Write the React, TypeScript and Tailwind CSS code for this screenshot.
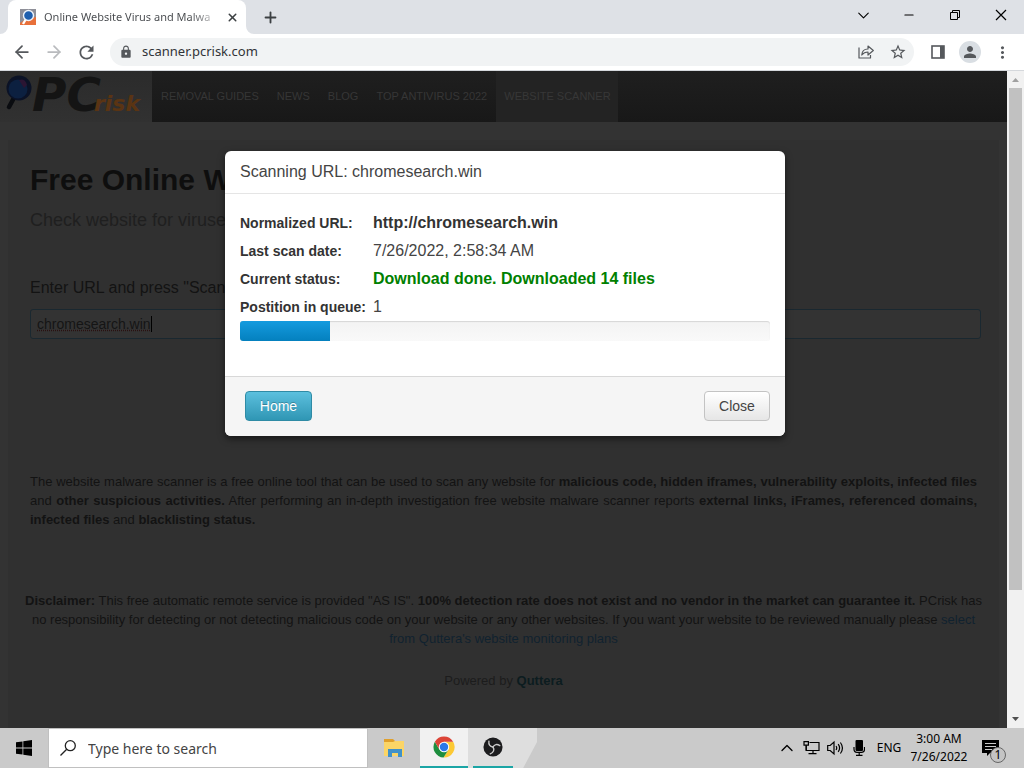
import React from "react";
import { ArrowLeft, ArrowRight, ChevronDown, ChevronUp, Minus, Plus, X } from "lucide-react";
import { MdLock, MdMoreVert, MdPerson, MdRefresh, MdStarBorder } from "react-icons/md";

const navItems = ["REMOVAL GUIDES", "NEWS", "BLOG", "TOP ANTIVIRUS 2022"];

function Magnifier({ className }: { className: string }) {
  return (
    <svg viewBox="0 0 28 38" className={className} aria-hidden="true">
      <path d="M10 22 L4 33" stroke="#0a0c10" strokeWidth="4.5" strokeLinecap="round" />
      <circle cx="14" cy="14" r="12.5" fill="#0b1226" />
      <circle cx="13" cy="15" r="9.5" fill="#0c2040" />
      <path d="M14 6 q6 -2 8 5 l-3 3 z" fill="#2b1533" />
    </svg>
  );
}

function TabStrip() {
  return (
    <header className="flex h-[34px] shrink-0 items-stretch bg-[#dee1e6]">
      <div className="flex w-[254px] items-end">
        <svg viewBox="0 0 8 8" className="h-2 w-2 shrink-0" aria-hidden="true">
          <path d="M8 0 V8 H0 A8 8 0 0 0 8 0 Z" fill="#fff" />
        </svg>
        <div className="flex h-full min-w-0 flex-1 items-center rounded-t-lg bg-white pl-3 pr-[6px]">
          <svg viewBox="0 0 16 16" className="mr-2 h-4 w-4 shrink-0" aria-hidden="true">
            <rect width="16" height="16" fill="#e8703a" />
            <path d="M0 0 H16 V8 L6 10 L0 14 Z" fill="#8e8f98" />
            <path d="M6 10 L3 15" stroke="#fff" strokeWidth="2.4" />
            <circle cx="8.5" cy="6.5" r="5" fill="#1f5fae" stroke="#eef3fa" strokeWidth="1.4" />
          </svg>
          <span className="min-w-0 flex-1 whitespace-nowrap bg-gradient-to-r from-[#45484c] from-85% to-[#ddd] bg-clip-text text-[11px] text-transparent">
            Online Website Virus and Malwa
          </span>
          <button type="button" aria-label="Close tab" className="ml-2 flex h-4 w-4 items-center justify-center text-[#3c4043]">
            <X size={13} strokeWidth={2.8} />
          </button>
        </div>
        <svg viewBox="0 0 8 8" className="h-2 w-2 shrink-0" aria-hidden="true">
          <path d="M0 0 V8 H8 A8 8 0 0 1 0 0 Z" fill="#fff" />
        </svg>
      </div>
      <button type="button" aria-label="New tab" className="flex w-8 items-center justify-center text-[#3c4043]">
        <Plus size={17} strokeWidth={2.6} />
      </button>
      <div className="ml-auto flex pb-1 text-black">
        <button type="button" aria-label="Search tabs" className="flex w-[46px] items-center justify-center">
          <ChevronDown size={19} strokeWidth={1.4} />
        </button>
        <button type="button" aria-label="Minimize" className="flex w-[46px] items-center justify-center">
          <Minus size={14} strokeWidth={2} />
        </button>
        <button type="button" aria-label="Restore" className="flex w-[46px] items-center justify-center">
          <svg viewBox="0 0 10 10" className="h-[10px] w-[10px]" fill="none" stroke="currentColor" aria-hidden="true">
            <path d="M0.5 2.5 H7.5 V9.5 H0.5 Z M2.5 2.5 V0.5 H9.5 V7.5 H7.5" />
          </svg>
        </button>
        <button type="button" aria-label="Close window" className="flex w-[46px] items-center justify-center">
          <svg viewBox="0 0 12 12" className="h-3 w-3" stroke="currentColor" strokeWidth="1.2" aria-hidden="true">
            <path d="M1 1 L11 11 M11 1 L1 11" />
          </svg>
        </button>
      </div>
    </header>
  );
}

function Toolbar() {
  return (
    <div className="flex h-[37px] shrink-0 items-center border-b border-[#d5d8dc] bg-white pl-[6px] pr-[6px] text-[#55585c]">
      <button type="button" aria-label="Back" className="flex w-8 justify-center">
        <ArrowLeft size={20} strokeWidth={2.1} />
      </button>
      <button type="button" aria-label="Forward" className="flex w-8 justify-center text-[#b9bbbe]">
        <ArrowRight size={20} strokeWidth={2.1} />
      </button>
      <button type="button" aria-label="Reload" className="flex w-8 justify-center">
        <MdRefresh size={21} />
      </button>
      <div className="ml-2 flex h-7 flex-1 items-center rounded-full bg-[#f1f3f4] pl-[9px]">
        <MdLock size={14} />
        <input
          aria-label="Address"
          defaultValue="scanner.pcrisk.com"
          className="ml-[9px] min-w-0 flex-1 bg-transparent text-[13px] text-[#303338] outline-none"
        />
        <button type="button" aria-label="Share" className="flex w-8 justify-center">
          <svg viewBox="0 0 16 16" className="h-4 w-4" fill="none" stroke="currentColor" strokeWidth="1.2" strokeLinejoin="round" aria-hidden="true">
            <path d="M1 3.5 V14 H12.5 V11" />
            <path d="M3.8 11 C4 7 6.5 5 10 5 V2 L15.3 6.5 L10 11 V8 C7.5 8 5.5 8.8 3.8 11 Z" />
          </svg>
        </button>
        <button type="button" aria-label="Bookmark" className="flex w-8 justify-center">
          <MdStarBorder size={18} />
        </button>
      </div>
      <button type="button" aria-label="Side panel" className="ml-2 flex w-8 justify-center">
        <svg viewBox="0 0 14 14" className="h-[14px] w-[14px]" aria-hidden="true">
          <rect x="1" y="1" width="12" height="12" fill="none" stroke="currentColor" strokeWidth="1.6" />
          <rect x="9" y="1" width="4" height="12" fill="currentColor" />
        </svg>
      </button>
      <button type="button" aria-label="Profile" className="flex w-8 justify-center">
        <span className="flex h-[22px] w-[22px] items-center justify-center rounded-full bg-[#d9dee3]">
          <MdPerson size={18} />
        </span>
      </button>
      <button type="button" aria-label="Menu" className="flex w-8 justify-center">
        <MdMoreVert size={19} />
      </button>
    </div>
  );
}

function SiteNav() {
  return (
    <nav className="flex h-[51px] shrink-0 bg-gradient-to-b from-[#1f1f1f] to-[#181818] text-[11px] text-[#363636]">
      <a href="#home" className="flex w-[152px] items-start bg-gradient-to-b from-[#2b2b2b] to-[#313131] pl-[5px]">
        <Magnifier className="mt-[3px] h-[38px] w-7 shrink-0" />
        <span className="-ml-px flex items-baseline font-['DejaVu_Sans'] font-bold italic leading-none">
          <span className="text-[47px] text-[#141414]">PC</span>
          <span className="-ml-[7px] text-[22px] text-[#5a3413]">risk</span>
        </span>
      </a>
      {navItems.map((item) => (
        <a key={item} href="#nav" className="flex items-center px-[9px]">
          {item}
        </a>
      ))}
      <a href="#scanner" className="flex items-center bg-[#232323] pl-2 pr-[7px] text-[#373737]">
        WEBSITE SCANNER
      </a>
    </nav>
  );
}

function ScannerPage() {
  return (
    <main className="flex min-h-0 flex-1 flex-col overflow-hidden bg-[#333333] pt-[18px]">
      <div className="mx-2 flex-1 bg-[#303030] px-[22px] pt-6 text-[13px] leading-[19px] text-[#131313]">
        <h1 className="text-[30px] font-bold leading-8 text-[#0e0e0e]">Free Online Website Scanner</h1>
        <p className="mt-3 text-[18px] leading-6 text-[#1f1f1f]">Check website for viruses</p>
        <form className="mt-11 mr-[-4px]">
          <label htmlFor="url" className="block text-[16px] leading-6">
            Enter URL and press &quot;Scan&quot;
          </label>
          <div className="relative mt-[9px]">
            <input
              id="url"
              defaultValue="chromesearch.win"
              className="block h-[30px] w-full rounded-[3px] border border-[#1a2830] bg-[#333333] px-[6px] text-[14px] text-[#151515] underline decoration-[#2a1010] decoration-dotted outline-none"
            />
            <span className="absolute left-[121px] top-[7px] h-4 w-px bg-black" />
          </div>
        </form>
        <p className="mt-[133px] text-justify">
          The website malware scanner is a free online tool that can be used to scan any website for{" "}
          <b>malicious code, hidden iframes, vulnerability exploits, infected files</b> and{" "}
          <b>other suspicious activities.</b> After performing an in-depth investigation free website malware scanner
          reports <b>external links, iFrames, referenced domains, infected files</b> and <b>blacklisting status.</b>
        </p>
        <p className="-mx-2 mt-[62px] text-center">
          <b>Disclaimer:</b> This free automatic remote service is provided &quot;AS IS&quot;.{" "}
          <b>100% detection rate does not exist and no vendor in the market can guarantee it.</b> PCrisk has no
          responsibility for detecting or not detecting malicious code on your website or any other websites. If you
          want your website to be reviewed manually please{" "}
          <a href="#plans" className="text-[#10222f]">
            select from Quttera&apos;s website monitoring plans
          </a>
        </p>
        <p className="mt-[23px] text-center text-[#1c1c1c]">
          Powered by{" "}
          <a href="#quttera" className="font-bold text-[#0c1c1f]">
            Quttera
          </a>
        </p>
      </div>
    </main>
  );
}

function ScanDialog() {
  const rows = [
    { label: "Normalized URL:", value: "http://chromesearch.win", style: "font-bold text-[#333]" },
    { label: "Last scan date:", value: "7/26/2022, 2:58:34 AM", style: "text-[#444]" },
    { label: "Current status:", value: "Download done. Downloaded 14 files", style: "font-bold text-[#008000]" },
    { label: "Postition in queue:", value: "1", style: "text-[#444]" },
  ];
  const progress = 17;
  return (
    <div className="absolute inset-0 flex items-start justify-center pl-[3px] pt-20">
      <section
        role="dialog"
        aria-labelledby="scan-title"
        className="w-[560px] overflow-hidden rounded-md bg-white shadow-[0_3px_7px_rgba(0,0,0,0.5)]"
      >
        <h2 id="scan-title" className="border-b border-[#e5e5e5] px-[15px] py-[9px] text-[16px] leading-6 text-[#444]">
          Scanning URL: chromesearch.win
        </h2>
        <div className="px-[15px] pb-[35px] pt-[15px]">
          <dl className="grid grid-cols-[133px_1fr] leading-7">
            {rows.map((row) => (
              <React.Fragment key={row.label}>
                <dt className="whitespace-nowrap text-[14px] font-bold text-[#333]">{row.label}</dt>
                <dd className={`text-[16px] ${row.style}`}>{row.value}</dd>
              </React.Fragment>
            ))}
          </dl>
          <div className="h-5 overflow-hidden rounded-[3px] bg-gradient-to-b from-[#f3f3f3] to-[#f9f9f9] shadow-[inset_0_1px_1px_rgba(0,0,0,0.12)]">
            <div className="h-full bg-gradient-to-b from-[#149bdf] to-[#0480be]" style={{ width: `${progress}%` }} />
          </div>
        </div>
        <footer className="flex justify-between border-t border-[#d8d8d8] bg-[#f5f5f5] pb-[15px] pl-5 pr-[15px] pt-[14px] text-[14px]">
          <button
            type="button"
            className="h-[30px] w-[67px] rounded border border-[#2f8ba5] bg-gradient-to-b from-[#5bc0de] to-[#2f96b4] text-white [text-shadow:0_-1px_0_rgba(0,0,0,0.25)]"
          >
            Home
          </button>
          <button
            type="button"
            className="h-[30px] w-[66px] rounded border border-[#c3c3c3] bg-gradient-to-b from-white to-[#e6e6e6] text-[#444]"
          >
            Close
          </button>
        </footer>
      </section>
    </div>
  );
}

function Scrollbar() {
  return (
    <div className="flex w-[17px] shrink-0 flex-col items-center bg-[#f1f1f1]" aria-hidden="true">
      <svg viewBox="0 0 17 17" className="h-[17px] w-[17px] shrink-0">
        <path d="M8.5 7 L12 11 H5 Z" fill="#a0a0a0" />
      </svg>
      <div className="min-h-0 w-[13px] flex-[502] bg-[#c1c1c1]" />
      <div className="min-h-0 flex-[121]" />
      <svg viewBox="0 0 17 17" className="h-[17px] w-[17px] shrink-0">
        <path d="M8.5 10 L12 6 H5 Z" fill="#505050" />
      </svg>
    </div>
  );
}

function Taskbar() {
  return (
    <footer className="flex h-10 shrink-0 items-stretch bg-[#cacaca] text-black">
      <button type="button" aria-label="Start" className="flex w-12 items-center justify-center">
        <svg viewBox="0 0 16 16" className="h-4 w-4" aria-hidden="true">
          <path d="M0 2.3 L6.5 1.4 V7.6 H0 Z M7.3 1.3 L16 0 V7.6 H7.3 Z M0 8.4 H6.5 V14.6 L0 13.7 Z M7.3 8.4 H16 V16 L7.3 14.7 Z" />
        </svg>
      </button>
      <label className="flex w-80 items-center border border-[#c0c0c0] bg-white pl-[11px]">
        <svg viewBox="0 0 16 16" className="h-4 w-4 shrink-0" fill="none" stroke="#222" strokeWidth="1.3" aria-hidden="true">
          <circle cx="10.3" cy="5.7" r="5" />
          <path d="M6.7 9.3 L0.5 15.5" />
        </svg>
        <input
          aria-label="Search"
          placeholder="Type here to search"
          className="ml-3 min-w-0 flex-1 bg-transparent text-[14px] outline-none placeholder:text-[#444]"
        />
      </label>
      <button type="button" aria-label="File Explorer" className="flex w-[52px] items-center justify-center">
        <svg viewBox="0 0 21 19" className="h-[19px] w-[21px]" aria-hidden="true">
          <path d="M0 0 H9 L11 2 H20 V16 H0 Z" fill="#e0a02c" />
          <path d="M0 3 H9 L11 2 H20 V17 H0 Z" fill="#fbd567" />
          <path d="M4 18 V10 H18 V18 H14 V14 H8 V18 Z" fill="#4191c9" />
        </svg>
      </button>
      <button type="button" aria-label="Chrome" className="flex w-12 items-center justify-center border-b-2 border-[#1ba5a5] bg-[#f1f1f1]">
        <svg viewBox="0 0 24 24" className="h-[22px] w-[22px]" aria-hidden="true">
          <path d="M12 6.3 H22 A11.5 11.5 0 0 1 11.5 23.5 L17 14.8 Z" fill="#fcc934" />
          <path d="M7 14.8 L2.04 6.25 A11.5 11.5 0 0 0 11.5 23.5 L17 14.8 Z" fill="#1e8e3e" />
          <path d="M2.04 6.25 A11.5 11.5 0 0 1 21.96 6.25 H12 L7 14.8 Z" fill="#dc4437" />
          <circle cx="12" cy="12" r="5.7" fill="#fff" />
          <circle cx="12" cy="12" r="4.6" fill="#2b78e8" />
        </svg>
      </button>
      <button
        type="button"
        aria-label="OBS Studio"
        className="flex w-[69px] bg-[#dedede] pl-[5px] [clip-path:polygon(0_0,100%_0,100%_35%,80%_100%,0_100%)]"
      >
        <span className="flex h-full w-10 items-center justify-center border-b-2 border-[#1ba5a5]">
          <svg viewBox="0 0 22 22" className="h-5 w-5" aria-hidden="true">
            <circle cx="11" cy="11" r="10.5" fill="#1c1c1e" />
            <g fill="none" stroke="#c9c9c9" strokeWidth="1.5" strokeLinecap="round">
              <path d="M11 11 C7.5 10.5 6 8 6.5 4.5" />
              <path d="M11 11 C12.5 8 15.5 7.5 18.5 9.5" />
              <path d="M11 11 C13 14 11.5 17 8 18.5" />
            </g>
          </svg>
        </span>
      </button>
      <div className="ml-auto flex items-center text-[12px]">
        <button type="button" aria-label="Show hidden icons" className="flex w-6 justify-center">
          <ChevronUp size={20} strokeWidth={1.6} />
        </button>
        <button type="button" aria-label="Network" className="flex w-6 justify-center">
          <svg viewBox="0 0 17 16" className="h-4 w-[17px]" fill="none" stroke="currentColor" strokeWidth="1.2" aria-hidden="true">
            <path d="M6.5 2.5 H16 V10.5 H3.2 V5.5 M10 10.5 V13.6 M5.5 13.6 H13.5" />
            <path d="M1 1.6 H5.4 V5.2 H1 Z M3.2 5.2 V10.5" />
          </svg>
        </button>
        <button type="button" aria-label="Volume" className="flex w-6 justify-center">
          <svg viewBox="0 0 17 16" className="h-4 w-[17px]" fill="none" stroke="currentColor" strokeWidth="1.2" aria-hidden="true">
            <path d="M0.7 5.5 H3.2 L7 2 V14 L3.2 10.5 H0.7 Z" />
            <path d="M9 6 Q10.5 8 9 10 M11.2 4.2 Q14 8 11.2 11.8 M13.4 2.5 Q17.5 8 13.4 13.5" />
          </svg>
        </button>
        <button type="button" aria-label="Microphone" className="flex w-6 justify-center">
          <svg viewBox="0 0 12 16" className="h-4 w-3" aria-hidden="true">
            <rect x="2.5" y="0" width="7.5" height="11" rx="1" />
            <path d="M1 7 V9 Q1 12.3 4 12.3 H8.5 Q11.5 12.3 11.5 9 V7 M6.2 12.3 V15 M3 15.3 H9.5" fill="none" stroke="currentColor" strokeWidth="1.2" />
          </svg>
        </button>
        <span className="w-9 text-center">ENG</span>
        <time className="w-16 text-center leading-[18px]">
          3:00 AM
          <br />
          7/26/2022
        </time>
        <button type="button" aria-label="Notifications" className="relative ml-[11px] mr-5 flex h-6 w-[22px] items-start pt-1">
          <svg viewBox="0 0 17 17" className="h-[17px] w-[17px]" aria-hidden="true">
            <path d="M0 0 H17 V13 H8 L5 16 V13 H0 Z" />
            <path d="M3 3.5 H14 M3 6.5 H14 M3 9.5 H10" stroke="#cacaca" strokeWidth="1.2" />
          </svg>
          <span className="absolute left-2 top-[11px] flex h-4 w-4 items-center justify-center rounded-full border border-[#666] bg-[#c4c4c4] text-[12px] leading-none">
            1
          </span>
        </button>
      </div>
    </footer>
  );
}

export default function App() {
  return (
    <div className="flex h-screen flex-col overflow-hidden font-['Noto_Sans',sans-serif]">
      <TabStrip />
      <Toolbar />
      <div className="flex min-h-0 flex-1">
        <div className="relative flex min-w-0 flex-1 flex-col font-['Liberation_Sans',Arial,sans-serif]">
          <SiteNav />
          <ScannerPage />
          <ScanDialog />
        </div>
        <Scrollbar />
      </div>
      <Taskbar />
    </div>
  );
}
